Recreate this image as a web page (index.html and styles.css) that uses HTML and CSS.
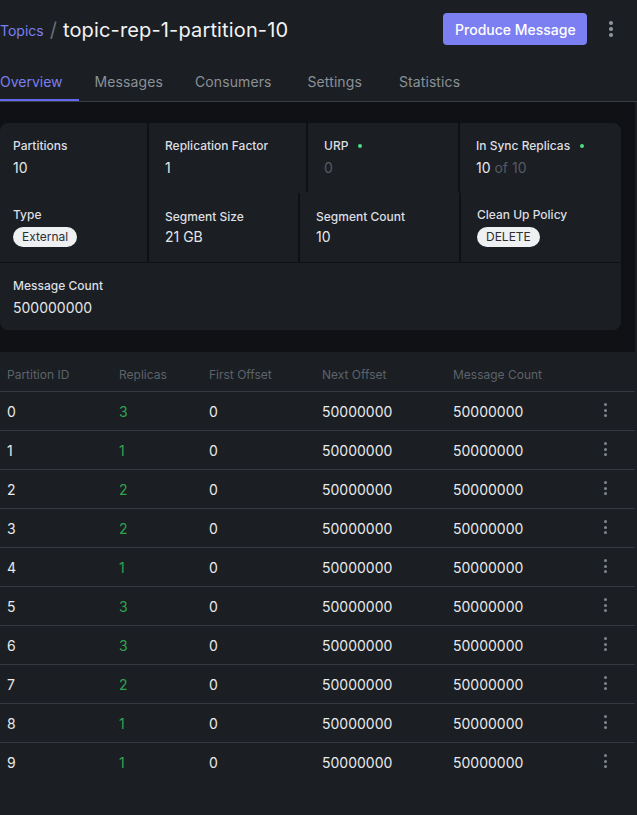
FILE: index.html
```html
<!DOCTYPE html>
<html>
<head>
<meta charset="utf-8">
<link rel="stylesheet" href="styles.css">
</head>
<body>
<header class="top">
  <div class="crumbs">
    <a class="crumb-link">Topics</a>
    <span class="crumb-sep">/</span>
    <h1 class="title">topic-rep-1-partition-10</h1>
  </div>
  <div class="actions">
    <button class="btn-primary">Produce Message</button>
    <span class="kebab kebab-lg"><i></i><i></i><i></i></span>
  </div>
</header>
<nav class="tabs">
  <span class="tab active">Overview</span>
  <span class="tab">Messages</span>
  <span class="tab tab-wide">Consumers</span>
  <span class="tab tab-wider">Settings</span>
  <span class="tab">Statistics</span>
</nav>
<section class="band">
  <div class="card">
    <div class="mrow mrow-1">
      <div class="cell"><div class="lbl">Partitions</div><div class="val">10</div></div>
      <div class="cell"><div class="lbl">Replication Factor</div><div class="val">1</div></div>
      <div class="cell"><div class="lbl">URP <span class="dot"></span></div><div class="val muted">0</div></div>
      <div class="cell"><div class="lbl">In Sync Replicas <span class="dot"></span></div><div class="val">10 <span class="muted">of 10</span></div></div>
    </div>
    <div class="mrow mrow-2">
      <div class="cell"><div class="lbl">Type</div><div class="val"><span class="pill">External</span></div></div>
      <div class="cell"><div class="lbl lbl-low">Segment Size</div><div class="val">21 GB</div></div>
      <div class="cell"><div class="lbl lbl-low">Segment Count</div><div class="val">10</div></div>
      <div class="cell"><div class="lbl">Clean Up Policy</div><div class="val"><span class="pill">DELETE</span></div></div>
    </div>
    <div class="mrow mrow-3">
      <div class="cell"><div class="lbl">Message Count</div><div class="val">500000000</div></div>
    </div>
  </div>
</section>
<section class="table-wrap">
  <table class="grid">
    <colgroup>
      <col class="c1"><col class="c2"><col class="c3"><col class="c4"><col class="c5"><col class="c6">
    </colgroup>
    <thead>
      <tr><th>Partition ID</th><th>Replicas</th><th>First Offset</th><th>Next Offset</th><th>Message Count</th><th></th></tr>
    </thead>
    <tbody>
      <tr><td>0</td><td class="green">3</td><td>0</td><td>50000000</td><td>50000000</td><td class="menu"><span class="kebab"><i></i><i></i><i></i></span></td></tr>
      <tr><td>1</td><td class="green">1</td><td>0</td><td>50000000</td><td>50000000</td><td class="menu"><span class="kebab"><i></i><i></i><i></i></span></td></tr>
      <tr><td>2</td><td class="green">2</td><td>0</td><td>50000000</td><td>50000000</td><td class="menu"><span class="kebab"><i></i><i></i><i></i></span></td></tr>
      <tr><td>3</td><td class="green">2</td><td>0</td><td>50000000</td><td>50000000</td><td class="menu"><span class="kebab"><i></i><i></i><i></i></span></td></tr>
      <tr><td>4</td><td class="green">1</td><td>0</td><td>50000000</td><td>50000000</td><td class="menu"><span class="kebab"><i></i><i></i><i></i></span></td></tr>
      <tr><td>5</td><td class="green">3</td><td>0</td><td>50000000</td><td>50000000</td><td class="menu"><span class="kebab"><i></i><i></i><i></i></span></td></tr>
      <tr><td>6</td><td class="green">3</td><td>0</td><td>50000000</td><td>50000000</td><td class="menu"><span class="kebab"><i></i><i></i><i></i></span></td></tr>
      <tr><td>7</td><td class="green">2</td><td>0</td><td>50000000</td><td>50000000</td><td class="menu"><span class="kebab"><i></i><i></i><i></i></span></td></tr>
      <tr><td>8</td><td class="green">1</td><td>0</td><td>50000000</td><td>50000000</td><td class="menu"><span class="kebab"><i></i><i></i><i></i></span></td></tr>
      <tr><td>9</td><td class="green">1</td><td>0</td><td>50000000</td><td>50000000</td><td class="menu"><span class="kebab"><i></i><i></i><i></i></span></td></tr>
    </tbody>
  </table>
</section>
</body>
</html>
```
FILE: styles.css
```css
* { box-sizing: border-box; }
html, body { margin: 0; padding: 0; }
body {
  background: #1b1e22;
  font-family: Inter, "Noto Sans", "Liberation Sans", sans-serif;
  color: #e6e8eb;
  width: 637px;
  min-height: 815px;
}
.top {
  height: 60px;
  display: flex;
  align-items: center;
  justify-content: space-between;
  padding-right: 24px;
}
.crumbs { display: flex; align-items: center; }
.crumb-link { color: #7b7ff0; font-size: 14px; line-height: 20px; margin-top: 2px; }
.crumb-sep { color: #6a7078; font-size: 20px; margin: 0 6px 0 6px; }
.title { margin: 0; font-size: 20px; font-weight: 400; color: #f2f3f5; line-height: 28px; letter-spacing: 0.15px; }
.actions { display: flex; align-items: center; gap: 22px; margin-top: -2px; }
.btn-primary {
  background: #7c7ff1;
  color: #fff;
  border: 0;
  border-radius: 4px;
  font-family: inherit;
  font-size: 14px;
  font-weight: 500;
  height: 32px;
  width: 144px;
  padding: 0;
}
.kebab { display: inline-flex; flex-direction: column; align-items: center; gap: 2.5px; }
.kebab i { display: block; width: 3px; height: 3px; border-radius: 50%; background: #80878f; }
.kebab-lg { gap: 2.5px; }
.kebab-lg i { width: 3.6px; height: 3.6px; background: #8b9299; }

.tabs {
  display: flex;
  gap: 16px;
  height: 42px;
  border-bottom: 1px solid #3a3f45;
}
.tab {
  padding-right: 16px;
  padding-top: 2px;
  font-size: 14px;
  line-height: 40px;
  color: #8a9199;
  height: 41px;
  letter-spacing: 0.1px;
}
.tab-wide { margin-right: 4px; }
.tab-wider { margin-right: 5px; }
.tab.active { color: #7b7ff0; border-bottom: 2px solid #6366f1; letter-spacing: 0; }

.band {
  background: #0f1114;
  padding: 21px 14px 22px 0;
  width: 635px;
}
.card {
  border-radius: 8px;
  overflow: hidden;
  background: #0f1114;
  display: grid;
  gap: 2px;
}
.mrow { display: grid; gap: 2px; }
.mrow-1 { grid-template-columns: 147px 157px 150px 161px; height: 67px; }
.mrow-2 { grid-template-columns: 147px 149px 159px 160px; height: 69px; }
.mrow-3 { grid-template-columns: 1fr; height: 67px; }
.cell { background: #1b1e22; padding: 15px 15px 15px 16px; }
.cell:first-child { padding-left: 13px; }
.lbl { font-size: 12px; line-height: 16px; font-weight: 500; color: #dcdfe2; display: flex; align-items: center; }
.lbl-low { margin-top: 2px; margin-bottom: -2px; }
.val { font-size: 14px; line-height: 20px; margin-top: 4px; color: #e4e6e9; }
.muted { color: #555b62; }
.dot { display: inline-block; width: 4px; height: 4px; border-radius: 50%; background: #4ade80; margin-left: 10px; }
.pill {
  display: inline-block;
  background: #eef0f2;
  color: #2b2f34;
  font-size: 12px;
  line-height: 20px;
  height: 20px;
  padding: 0 9px;
  border-radius: 10px;
  vertical-align: top;
}

.table-wrap { width: 635px; background: #1b1e22; min-height: 463px; }
.grid { border-collapse: collapse; table-layout: fixed; width: 635px; }
.c1 { width: 112px; } .c2 { width: 90px; } .c3 { width: 113px; }
.c4 { width: 131px; } .c5 { width: 129px; } .c6 { width: 60px; }
.grid th {
  text-align: left;
  font-weight: 400;
  font-size: 12px;
  color: #5c636b;
  height: 39px;
  padding: 7px 0 0 7px;
}
.grid td {
  height: 39px;
  padding: 2px 0 0 7px;
  font-size: 14px;
  color: #e8eaed;
  border-top: 1px solid #353a40;
}
.grid td.green { color: #2fa44f; }
.grid td.menu { padding: 0 0 4px 0; text-align: center; }
.grid td.menu .kebab { vertical-align: middle; }
```
